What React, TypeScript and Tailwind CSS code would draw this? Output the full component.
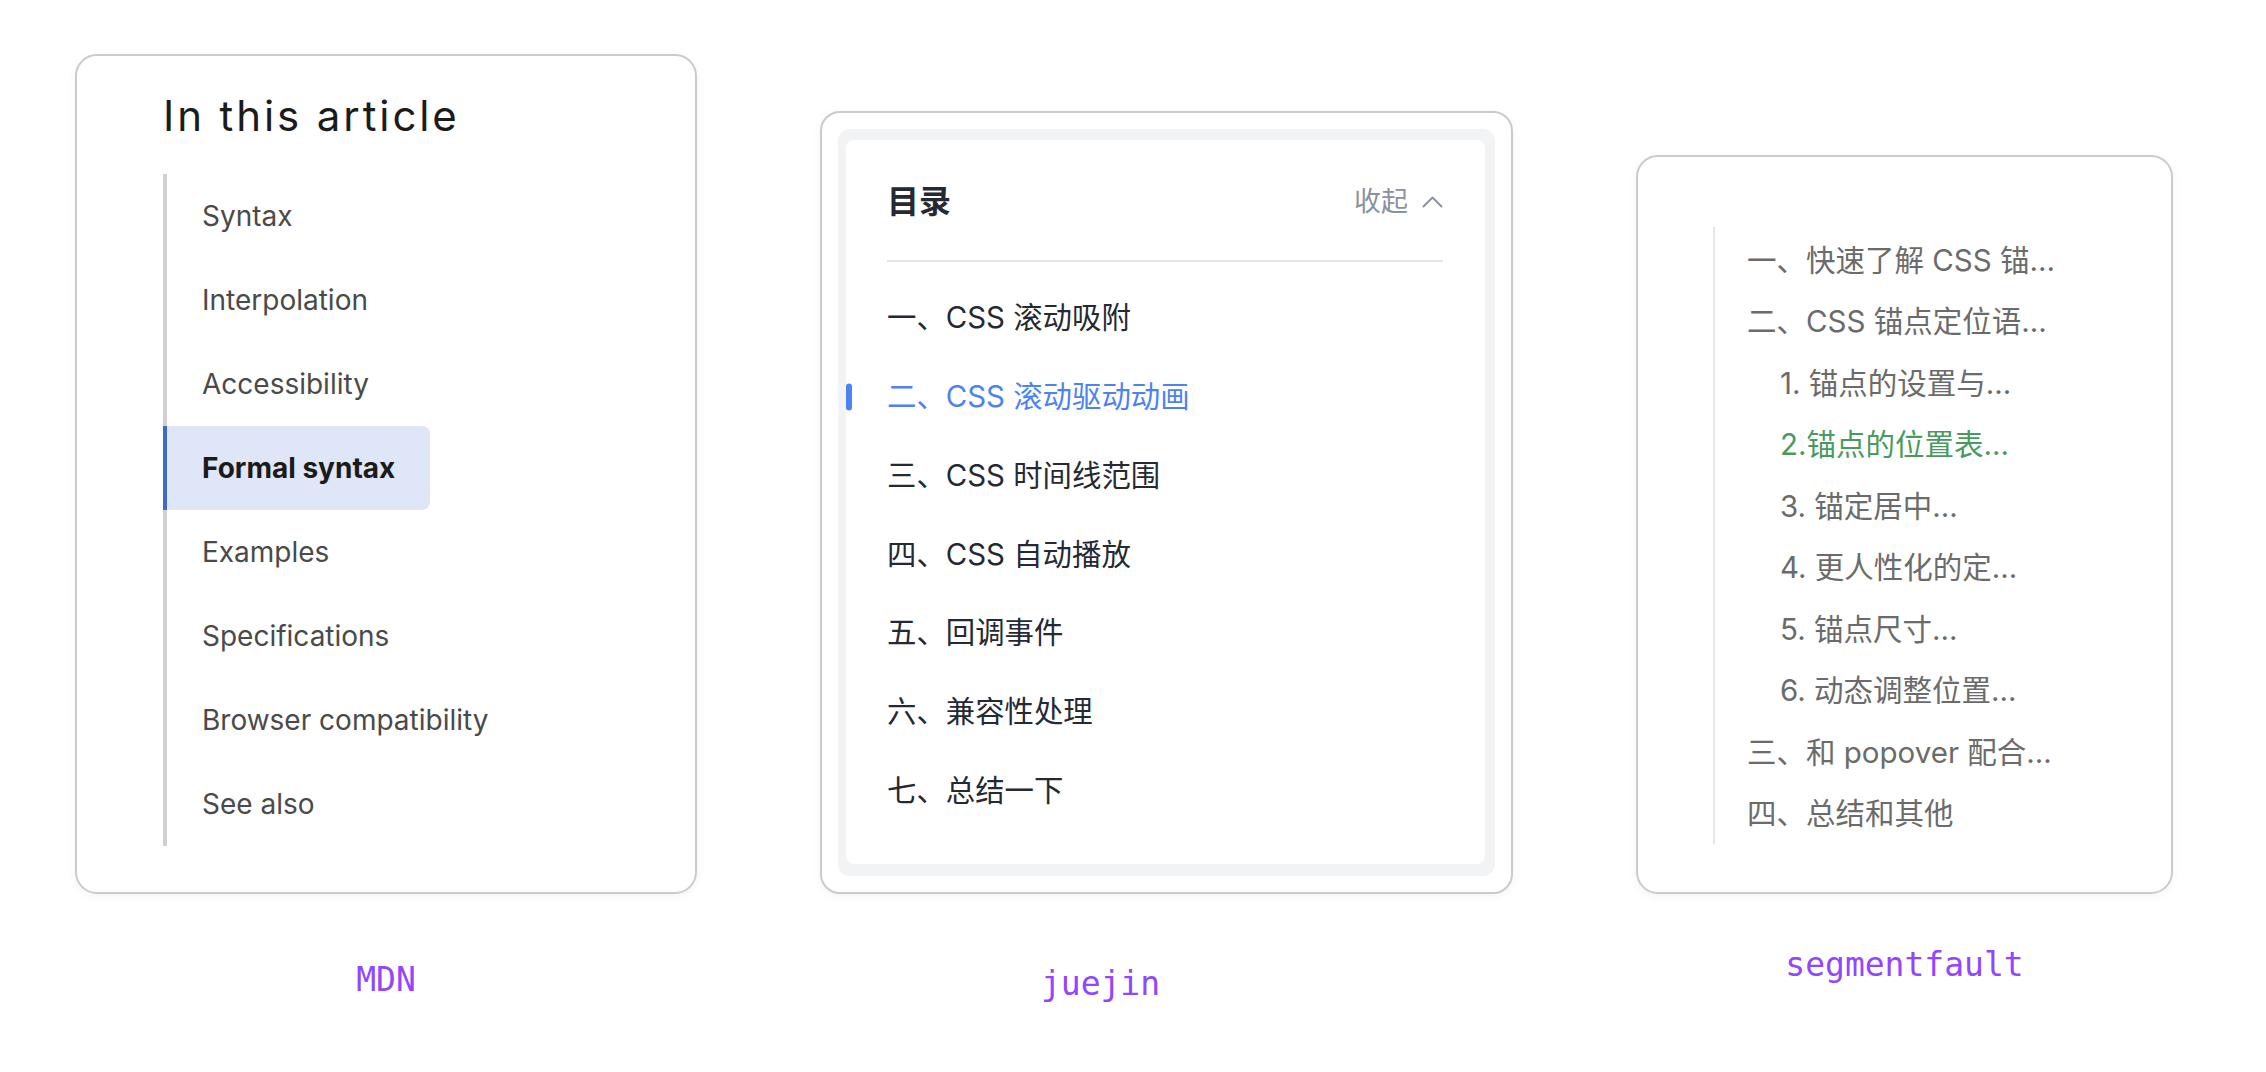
import React from "react";

const mdnItems = [
  "Syntax",
  "Interpolation",
  "Accessibility",
  "Formal syntax",
  "Examples",
  "Specifications",
  "Browser compatibility",
  "See also",
];

const juejinItems = [
  "一、CSS 滚动吸附",
  "二、CSS 滚动驱动动画",
  "三、CSS 时间线范围",
  "四、CSS 自动播放",
  "五、回调事件",
  "六、兼容性处理",
  "七、总结一下",
];

const sfItems: { text: string; sub?: boolean; active?: boolean }[] = [
  { text: "一、快速了解 CSS 锚..." },
  { text: "二、CSS 锚点定位语..." },
  { text: "1. 锚点的设置与...", sub: true },
  { text: "2.锚点的位置表...", sub: true, active: true },
  { text: "3. 锚定居中...", sub: true },
  { text: "4. 更人性化的定...", sub: true },
  { text: "5. 锚点尺寸...", sub: true },
  { text: "6. 动态调整位置...", sub: true },
  { text: "三、和 popover 配合..." },
  { text: "四、总结和其他" },
];

const cjk = { fontFamily: '"Inter", "Noto Sans CJK SC", sans-serif' };
const mono = { fontFamily: '"DejaVu Sans Mono", "Liberation Mono", monospace' };

function MdnCard() {
  return (
    <div
      className="w-[622px] h-[840px] rounded-[22px] border-2 border-[#cbcbcb] bg-white shadow-[0_2px_10px_rgba(0,0,0,0.05)] pl-[86px] pt-[35px]"
      style={{ fontFamily: '"Inter", sans-serif' }}
    >
      <h2 className="text-[42px] leading-[50px] tracking-[2.9px] text-[#1b1b1b] font-normal">
        In this article
      </h2>
      <ul className="mt-[33px] border-l-4 border-[#d0d0d0]">
        {mdnItems.map((t) =>
          t === "Formal syntax" ? (
            <li key={t}>
              <span className="-ml-[4px] inline-flex h-[84px] items-center border-l-4 border-[#3e6bc5] bg-[#dfe6f7] rounded-r-[8px] pl-[35px] pr-[35px] text-[28px] font-bold text-[#1b1b1b]">
                {t}
              </span>
            </li>
          ) : (
            <li key={t}>
              <span className="inline-flex h-[84px] items-center pl-[35px] text-[28px] text-[#4a4a4a]">
                {t}
              </span>
            </li>
          )
        )}
      </ul>
    </div>
  );
}

function JuejinCard() {
  return (
    <div className="w-[693px] h-[783px] rounded-[20px] border-2 border-[#cbcbcb] bg-white shadow-[0_2px_10px_rgba(0,0,0,0.05)] p-[16px]" style={cjk}>
      <div className="h-full rounded-[12px] bg-[#f2f3f5] pt-[11px] pl-[8px] pr-[10px] pb-[12px]">
        <div className="h-full rounded-[8px] bg-white pl-[41px] pr-[42px] pt-[38px]">
          <div className="flex h-[48px] items-center justify-between">
            <span className="text-[32px] font-bold text-[#252933]">目录</span>
            <span className="flex items-center text-[27px] text-[#8a919f]">
              收起
              <svg width="21" height="12" viewBox="0 0 21 12" className="ml-[14px]" fill="none">
                <polyline points="1.5,10.5 10.5,1.5 19.5,10.5" stroke="#8a919f" strokeWidth="2" strokeLinecap="round" strokeLinejoin="round" />
              </svg>
            </span>
          </div>
          <div className="mt-[34px] border-b-2 border-[#e4e6eb]" />
          <ul className="mt-[17px]">
            {juejinItems.map((t, i) => (
              <li key={t} className="relative flex h-[78.75px] items-center">
                {i === 1 && (
                  <span className="absolute -left-[41px] top-1/2 -translate-y-1/2 h-[27px] w-[6px] rounded-full bg-[#4d82f3]" />
                )}
                <span className={`text-[29.4px] ${i === 1 ? "text-[#4d82f3]" : "text-[#252933]"}`}>{t}</span>
              </li>
            ))}
          </ul>
        </div>
      </div>
    </div>
  );
}

function SfCard() {
  return (
    <div className="w-[537px] h-[739px] rounded-[22px] border-2 border-[#cbcbcb] bg-white shadow-[0_2px_10px_rgba(0,0,0,0.05)] pl-[75px] pt-[70px]" style={cjk}>
      <ul className="border-l-2 border-[#e4e6ea] pt-[2px]">
        {sfItems.map((it) => (
          <li
            key={it.text}
            className={`flex h-[61.5px] items-center text-[29.5px] ${it.sub ? "pl-[65px]" : "pl-[32px]"} ${
              it.active ? "text-[#4a9a60]" : "text-[#6b6b6b]"
            }`}
          >
            {it.text}
          </li>
        ))}
      </ul>
    </div>
  );
}

export default function App() {
  return (
    <div className="w-[2266px] h-[1072px] bg-white flex items-start pl-[75px] gap-[123px]">
      <div className="flex flex-col items-center mt-[54px]">
        <MdnCard />
        <div className="mt-[66px] text-[33px] leading-[40px] text-[#9146ff]" style={mono}>MDN</div>
      </div>
      <div className="flex flex-col items-center mt-[111px]">
        <JuejinCard />
        <div className="mt-[70px] mr-[132px] text-[33px] leading-[40px] text-[#9146ff]" style={mono}>juejin</div>
      </div>
      <div className="flex flex-col items-center mt-[155px]">
        <SfCard />
        <div className="mt-[51px] text-[33px] leading-[40px] text-[#9146ff]" style={mono}>segmentfault</div>
      </div>
    </div>
  );
}
